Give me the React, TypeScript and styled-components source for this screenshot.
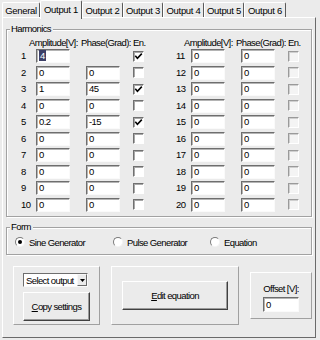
import React from "react";
import styled, { createGlobalStyle } from "styled-components";

const BG = "#ebebeb";

const GlobalStyle = createGlobalStyle`
  html, body { margin: 0; padding: 0; background: ${BG}; }
  body {
    font-family: "Liberation Sans", Arial, sans-serif;
    font-size: 9.5px;
    letter-spacing: -0.6px;
    color: #000;
  }
`;

const Window = styled.div`
  width: 320px;
  height: 340px;
  overflow: hidden;
  background: ${BG};
  display: flex;
  flex-direction: column;
`;

const TabBar = styled.div`
  display: flex;
  align-items: flex-end;
  height: 17px;
  padding-left: 2px;
  position: relative;
  z-index: 2;
`;

const Tab = styled.div<{ $w: number; $active?: boolean }>`
  box-sizing: border-box;
  width: ${(p) => p.$w}px;
  height: ${(p) => (p.$active ? 19 : 15)}px;
  margin-bottom: ${(p) => (p.$active ? -2 : 0)}px;
  padding-bottom: ${(p) => (p.$active ? 2 : 0)}px;
  display: flex;
  align-items: center;
  justify-content: center;
  white-space: nowrap;
  letter-spacing: -0.3px;
  background: ${BG};
  border-top: 1px solid #fff;
  border-left: 1px solid #fff;
  border-right: 1px solid #5a5a5a;
  border-radius: 2px 2px 0 0;
`;

const Pane = styled.div`
  box-sizing: border-box;
  margin-left: 2px;
  width: 314px;
  height: 321px;
  border-top: 1px solid #fff;
  border-left: 1px solid #fff;
  border-right: 1px solid #6a6a6a;
  border-bottom: 1px solid #6a6a6a;
  padding: 5px 3px 0 3px;
  display: flex;
  flex-direction: column;
`;

const Group = styled.fieldset<{ $gap?: number }>`
  margin: ${(p) => p.$gap ?? 0}px 0 0 0;
  padding: 0;
  min-width: 0;
  border: 1px solid #a2a2a2;
  box-shadow: inset 1px 1px 0 #fff, 1px 1px 0 #fff;
`;

const GroupLabel = styled.legend`
  margin-left: 3px;
  padding: 0 2px 0 1px;
  line-height: 12px;
  background: ${BG};
`;

const HarmonicsBody = styled.div`
  display: flex;
  gap: 32px;
  padding: 2px 0 3px 14px;
`;

const Half = styled.div`
  display: grid;
  grid-template-columns: 15px 50px 47px 11px;
  grid-template-rows: 11px repeat(10, 16.5px);
  align-items: center;
`;

const HeadLabel = styled.div<{ $shift: number }>`
  margin-left: ${(p) => p.$shift}px;
  white-space: nowrap;
  line-height: 11px;
`;

const Num = styled.div`
  line-height: 14px;
`;

const Field = styled.div<{ $w: number; $h?: number }>`
  box-sizing: border-box;
  width: ${(p) => p.$w}px;
  height: ${(p) => p.$h ?? 14}px;
  background: #fff;
  border-top: 1px solid #6e6e6e;
  border-left: 1px solid #6e6e6e;
  border-right: 1px solid #fafafa;
  border-bottom: 1px solid #fafafa;
  box-shadow: inset 1px 1px 0 #b4b4b4;
  padding-left: 2px;
  line-height: ${(p) => (p.$h ?? 14) - 2}px;
  white-space: nowrap;
  overflow: hidden;
`;

const Selected = styled.span`
  background: #3c3f66;
  color: #fff;
  padding: 0 1px;
`;

const CheckBox = styled.div<{ $dim?: boolean }>`
  box-sizing: border-box;
  width: 11px;
  height: 11px;
  background: ${(p) => (p.$dim ? "#f4f4f4" : "#fff")};
  border-top: 1px solid ${(p) => (p.$dim ? "#9a9a9a" : "#707070")};
  border-left: 1px solid ${(p) => (p.$dim ? "#9a9a9a" : "#707070")};
  border-right: 1px solid #fff;
  border-bottom: 1px solid #fff;
  box-shadow: inset 1px 1px 0 ${(p) => (p.$dim ? "#cfcfcf" : "#a8a8a8")};
  display: flex;
  align-items: center;
  justify-content: center;
`;

const RadioRow = styled.div`
  display: grid;
  grid-template-columns: 98px 97px auto;
  height: 14px;
  align-items: center;
  padding: 2px 0 5px 8px;
`;

const RadioOption = styled.div`
  display: flex;
  align-items: center;
  gap: 4px;
  white-space: nowrap;
`;

const RadioCircle = styled.div`
  box-sizing: border-box;
  width: 10px;
  height: 10px;
  border-radius: 50%;
  background: #fff;
  border: 1px solid;
  border-color: #7a7a7a #f4f4f4 #f4f4f4 #7a7a7a;
  display: flex;
  align-items: center;
  justify-content: center;
`;

const RadioDot = styled.div`
  width: 4px;
  height: 4px;
  border-radius: 50%;
  background: #000;
`;

const BottomRow = styled.div`
  display: flex;
  align-items: center;
  gap: 11px;
  margin-top: 11px;
  padding-left: 7px;
`;

const Panel = styled.div<{ $w: number; $h: number }>`
  box-sizing: border-box;
  width: ${(p) => p.$w}px;
  height: ${(p) => p.$h}px;
  border: 1px solid;
  border-color: #fff #a0a0a0 #a0a0a0 #fff;
  display: flex;
  flex-direction: column;
`;

const CopyPanel = styled(Panel)`
  align-items: flex-start;
  padding: 6px 0 0 9px;
  gap: 5px;
`;

const CenterPanel = styled(Panel)`
  align-items: center;
  justify-content: center;
`;

const OffsetPanel = styled(Panel)`
  align-items: center;
  justify-content: flex-end;
  padding-bottom: 6px;
  gap: 3px;
`;

const Dropdown = styled.div`
  box-sizing: border-box;
  width: 65px;
  height: 14px;
  background: #fff;
  border-top: 1px solid #6e6e6e;
  border-left: 1px solid #6e6e6e;
  border-right: 1px solid #fafafa;
  border-bottom: 1px solid #fafafa;
  display: flex;
  align-items: center;
  padding-left: 2px;
  white-space: nowrap;
`;

const DropText = styled.span`
  flex: 1;
  overflow: hidden;
`;

const DropArrow = styled.div`
  box-sizing: border-box;
  width: 10px;
  height: 12px;
  background: ${BG};
  border: 1px solid;
  border-color: #f8f8f8 #6a6a6a #6a6a6a #f8f8f8;
  display: flex;
  align-items: center;
  justify-content: center;
`;

const Button = styled.button<{ $w: number }>`
  box-sizing: border-box;
  width: ${(p) => p.$w}px;
  height: 29px;
  margin: 0;
  padding: 0;
  font: inherit;
  letter-spacing: inherit;
  color: #000;
  background: ${BG};
  border: 1px solid;
  border-color: #fff #404040 #404040 #fff;
  box-shadow: inset -1px -1px 0 #9a9a9a;
  display: flex;
  align-items: center;
  justify-content: center;
`;

const Mnemonic = styled.span`
  text-decoration: underline;
`;

const Caption = styled.div`
  line-height: 11px;
  white-space: nowrap;
`;

type Row = { n: number; a: string; p: string | null; en: boolean; sel?: boolean };

const leftRows: Row[] = [
  { n: 1, a: "4", p: null, en: true, sel: true },
  { n: 2, a: "0", p: "0", en: false },
  { n: 3, a: "1", p: "45", en: true },
  { n: 4, a: "0", p: "0", en: false },
  { n: 5, a: "0.2", p: "-15", en: true },
  { n: 6, a: "0", p: "0", en: false },
  { n: 7, a: "0", p: "0", en: false },
  { n: 8, a: "0", p: "0", en: false },
  { n: 9, a: "0", p: "0", en: false },
  { n: 10, a: "0", p: "0", en: false },
];

const rightRows: Row[] = Array.from({ length: 10 }, (_, i) => ({
  n: 11 + i,
  a: "0",
  p: "0",
  en: false,
}));

const Check = () => (
  <svg width="9" height="9" viewBox="0 0 9 9">
    <path d="M1.3 3.8 L3.4 6.2 L7.8 1.6" stroke="#000" strokeWidth="1.6" fill="none" />
  </svg>
);

const HarmonicHalf = ({ rows, dim }: { rows: Row[]; dim?: boolean }) => (
  <Half>
    <div />
    <HeadLabel $shift={-7}>Amplitude[V]:</HeadLabel>
    <HeadLabel $shift={-5}>Phase(Grad):</HeadLabel>
    <HeadLabel $shift={0}>En.</HeadLabel>
    {rows.map((r) => (
      <React.Fragment key={r.n}>
        <Num>{r.n}</Num>
        <Field $w={34}>{r.sel ? <Selected>{r.a}</Selected> : r.a}</Field>
        {r.p === null ? <div /> : <Field $w={34}>{r.p}</Field>}
        <CheckBox $dim={dim}>{r.en && <Check />}</CheckBox>
      </React.Fragment>
    ))}
  </Half>
);

const Radio = ({ label, checked }: { label: string; checked?: boolean }) => (
  <RadioOption>
    <RadioCircle>{checked && <RadioDot />}</RadioCircle>
    {label}
  </RadioOption>
);

const tabs = [
  { label: "General", w: 38 },
  { label: "Output 1", w: 42, active: true },
  { label: "Output 2", w: 41 },
  { label: "Output 3", w: 40 },
  { label: "Output 4", w: 41 },
  { label: "Output 5", w: 40 },
  { label: "Output 6", w: 42 },
];

export default function App() {
  return (
    <>
      <GlobalStyle />
      <Window>
        <TabBar>
          {tabs.map((t) => (
            <Tab key={t.label} $w={t.w} $active={t.active}>
              {t.label}
            </Tab>
          ))}
        </TabBar>
        <Pane>
          <Group>
            <GroupLabel>Harmonics</GroupLabel>
            <HarmonicsBody>
              <HarmonicHalf rows={leftRows} />
              <HarmonicHalf rows={rightRows} dim />
            </HarmonicsBody>
          </Group>
          <Group $gap={4}>
            <GroupLabel>Form</GroupLabel>
            <RadioRow>
              <Radio label="Sine Generator" checked />
              <Radio label="Pulse Generator" />
              <Radio label="Equation" />
            </RadioRow>
          </Group>
          <BottomRow>
            <CopyPanel $w={87} $h={59}>
              <Dropdown>
                <DropText>Select output</DropText>
                <DropArrow>
                  <svg width="5" height="3" viewBox="0 0 5 3">
                    <path d="M0 0 H5 L2.5 3 Z" fill="#000" />
                  </svg>
                </DropArrow>
              </Dropdown>
              <Button $w={67}>
                <Mnemonic>C</Mnemonic>opy settings
              </Button>
            </CopyPanel>
            <CenterPanel $w={128} $h={59}>
              <Button $w={106}>
                <Mnemonic>E</Mnemonic>dit equation
              </Button>
            </CenterPanel>
            <OffsetPanel $w={62} $h={47}>
              <Caption>Offset [V]:</Caption>
              <Field $w={36} $h={15}>0</Field>
            </OffsetPanel>
          </BottomRow>
        </Pane>
      </Window>
    </>
  );
}
